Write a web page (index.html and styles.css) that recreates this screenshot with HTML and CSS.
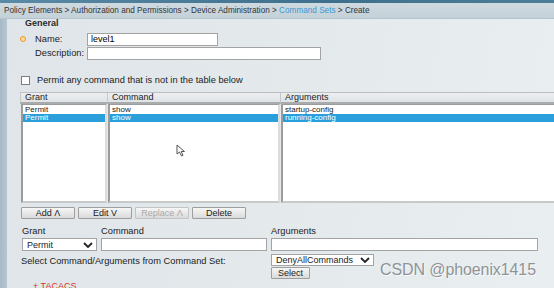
FILE: index.html
```html
<!DOCTYPE html>
<html>
<head>
    <meta charset="utf-8">
    <title>Command Sets - Create</title>
    <link rel="stylesheet" href="styles.css">
</head>
<body>
    <div class="topline"></div>
    <div class="crumbs">
        Policy Elements &gt; Authorization and Permissions &gt; Device Administration &gt;
        <a href="#">Command Sets</a> &gt; Create
    </div>
    <div class="main">
        <div class="side"></div>
        <div class="content">
            <div class="section-title">General</div>

            <div class="field-row first">
                <span class="req"></span>
                <label>Name:</label>
                <input class="name-input" type="text" value="level1">
            </div>
            <div class="field-row">
                <span class="req blank"></span>
                <label>Description:</label>
                <input class="desc-input" type="text">
            </div>

            <div class="check-row">
                <span class="checkbox"></span>
                <span>Permit any command that is not in the table below</span>
            </div>

            <div class="table">
                <div class="th">Grant</div>
                <div class="th">Command</div>
                <div class="th">Arguments</div>
                <div class="list">
                    <div class="item">Permit</div>
                    <div class="item sel">Permit</div>
                </div>
                <div class="list">
                    <div class="item">show</div>
                    <div class="item sel">show</div>
                </div>
                <div class="list">
                    <div class="item">startup-config</div>
                    <div class="item sel">running-config</div>
                </div>
            </div>

            <div class="btn-row">
                <button>Add &Lambda;</button>
                <button>Edit V</button>
                <button class="disabled">Replace &Lambda;</button>
                <button>Delete</button>
            </div>

            <div class="edit-grid">
                <div class="lbl">Grant</div>
                <div class="lbl">Command</div>
                <div class="lbl">Arguments</div>
                <div class="select grant-select">
                    <span>Permit</span>
                    <svg width="10" height="6" viewBox="0 0 10 6"><path d="M1 1 L5 5 L9 1" fill="none" stroke="#222" stroke-width="1.8"/></svg>
                </div>
                <input type="text">
                <input type="text">
            </div>

            <div class="set-row">
                <div class="set-label">Select Command/Arguments from Command Set:</div>
                <div class="set-controls">
                    <div class="select set-select">
                        <span>DenyAllCommands</span>
                        <svg width="10" height="6" viewBox="0 0 10 6"><path d="M1 1 L5 5 L9 1" fill="none" stroke="#222" stroke-width="1.8"/></svg>
                    </div>
                    <button class="small-btn">Select</button>
                </div>
            </div>

            <div class="more">+ TACACS</div>
        </div>
    </div>

    <svg class="cursor" width="12" height="13" viewBox="0 0 12 13">
        <path d="M1 1 L1 10 L3.5 8 L5.5 12 L7 11.3 L5.2 7.5 L8.5 7.5 Z" fill="#fff" stroke="#555" stroke-width="1"/>
    </svg>
    <div class="watermark">CSDN @phoenix1415</div>
</body>
</html>
```

FILE: styles.css
```css
body {
    margin: 0;
    width: 554px;
    height: 288px;
    overflow: hidden;
    position: relative;
    font-family: "Liberation Sans", Arial, sans-serif;
    font-size: 9.3px;
    color: #222;
    background: #dfe5e9;
}

.topline {
    height: 3px;
    background: linear-gradient(90deg, #5a8aa6, #3e6f8c 60%, #4d7e99);
}

.crumbs {
    height: 16px;
    line-height: 15px;
    padding-left: 4px;
    font-size: 8.2px;
    color: #333;
    white-space: nowrap;
    background: linear-gradient(180deg, #cfdae0, #c4d1d8);
    border-bottom: 1px solid #b4c3cc;
    box-sizing: border-box;
}

.crumbs a {
    color: #3b98d2;
    text-decoration: none;
}

.main {
    display: flex;
    height: 269px;
}

.side {
    width: 7px;
    flex: none;
    background: linear-gradient(90deg, #a6b9c7, #b7c7d2);
}

.content {
    flex: 1;
    padding-left: 13px;
    background: linear-gradient(100deg, #dfe5e9 0%, #e4e9ec 50%, #e9eef1 100%);
    overflow: hidden;
}

.section-title {
    font-weight: bold;
    font-size: 9px;
    line-height: 9px;
    height: 8px;
    overflow: hidden;
    padding-left: 5px;
    color: #2a2a2a;
}

.field-row {
    display: flex;
    align-items: center;
    height: 14px;
}

.field-row.first {
    margin-top: 5px;
}

.req {
    width: 4px;
    height: 4px;
    border-radius: 50%;
    border: 1.5px solid #f29a1f;
    background: #ffd9a0;
    margin-right: 9px;
    flex: none;
}

.req.blank {
    visibility: hidden;
}

.field-row label {
    width: 52px;
}

input {
    height: 13px;
    box-sizing: border-box;
    border: 1px solid #a3a3a3;
    background: #fff;
    font-family: inherit;
    font-size: 9px;
    padding: 0 3px;
    margin: 0;
}

.name-input {
    width: 131px;
}

.desc-input {
    width: 234px;
}

.check-row {
    display: flex;
    align-items: center;
    gap: 7px;
    margin-top: 15px;
    margin-left: 1px;
    height: 10px;
}

.checkbox {
    width: 9px;
    height: 9px;
    border: 1px solid #7d7d7d;
    background: #fff;
    box-sizing: border-box;
}

.table {
    display: grid;
    grid-template-columns: 87px 173px 280px;
    grid-template-rows: 11px 99px;
    margin-top: 7px;
    width: 540px;
    border-top: 1px solid #b9bfc3;
}

.th {
    background: linear-gradient(180deg, #eceef0, #e0e3e6);
    border-bottom: 2px solid #a9abad;
    border-left: 1px solid #c3c7ca;
    line-height: 9px;
    padding-left: 4px;
    font-size: 9px;
}

.list {
    background: #fff;
    border: 2px solid #9c9c9c;
    border-right-color: #dcdcdc;
    border-bottom-color: #c8c8c8;
    border-top-width: 1px;
    box-sizing: border-box;
    margin-left: 1px;
    padding-top: 1px;
}

.item {
    height: 8px;
    line-height: 8px;
    font-size: 8px;
    padding-left: 2px;
    white-space: nowrap;
    overflow: hidden;
}

.item.sel {
    background: #2b9fdb;
    color: #fff;
}

.btn-row {
    display: flex;
    gap: 3px;
    margin-top: 4px;
    margin-left: 1px;
}

button {
    font-family: inherit;
    font-size: 9px;
    color: #222;
    height: 12px;
    padding: 0;
    background: linear-gradient(180deg, #f6f6f6, #dadada);
    border: 1px solid #9e9e9e;
    border-radius: 1px;
    line-height: 10px;
}

.btn-row button {
    width: 54px;
}

.btn-row button.disabled {
    color: #a9a9a9;
    border-color: #c4c4c4;
}

.edit-grid {
    display: grid;
    grid-template-columns: 75px 166px 267px;
    column-gap: 4px;
    row-gap: 1px;
    margin-top: 7px;
    margin-left: 2px;
}

.lbl {
    line-height: 11px;
}

.select {
    display: flex;
    align-items: center;
    justify-content: space-between;
    height: 13px;
    box-sizing: border-box;
    border: 1px solid #a3a3a3;
    background: #fff;
    padding: 0 3px 0 4px;
    font-size: 9px;
}

.set-row {
    display: flex;
    margin-top: 3px;
    margin-left: 1px;
}

.set-label {
    width: 250px;
    line-height: 14px;
}

.set-controls {
    display: flex;
    flex-direction: column;
    align-items: flex-start;
    gap: 1px;
}

.set-select {
    width: 103px;
    height: 12px;
}

.small-btn {
    width: 39px;
    height: 12px;
}

.more {
    margin-top: 2px;
    margin-left: 13px;
    color: #d9342b;
    font-size: 9px;
}

.cursor {
    position: absolute;
    left: 176px;
    top: 144px;
}

.watermark {
    position: absolute;
    left: 380px;
    top: 261px;
    font-size: 16px;
    color: #8f9396;
    text-shadow: 1px 1px 0 rgba(255, 255, 255, 0.7);
    letter-spacing: -0.1px;
}
```
